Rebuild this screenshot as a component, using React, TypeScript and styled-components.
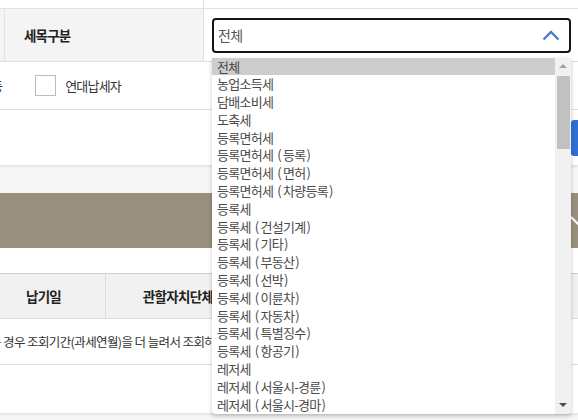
import * as React from "react";
import styled, { createGlobalStyle } from "styled-components";

const FONT = `"Noto Sans CJK KR", "Noto Sans", sans-serif`;

const GlobalStyle = createGlobalStyle`
  html, body {
    margin: 0;
    padding: 0;
    background: #f6f6f6;
    overflow: hidden;
  }
  body {
    font-family: ${FONT};
    color: #333;
  }
`;

const TAX_ITEMS = [
  "전체",
  "농업소득세",
  "담배소비세",
  "도축세",
  "등록면허세",
  "등록면허세(등록)",
  "등록면허세(면허)",
  "등록면허세(차량등록)",
  "등록세",
  "등록세(건설기계)",
  "등록세(기타)",
  "등록세(부동산)",
  "등록세(선박)",
  "등록세(이륜차)",
  "등록세(자동차)",
  "등록세(특별징수)",
  "등록세(항공기)",
  "레저세",
  "레저세(서울시-경륜)",
  "레저세(서울시-경마)",
];

const Page = styled.div`
  width: 640px;
  height: 420px;
  display: flex;
  flex-direction: column;
`;

const SearchPanel = styled.section`
  background: #fff;
  box-shadow: 0 2px 3px rgba(0, 0, 0, 0.08);
  display: flex;
  flex-direction: column;
  height: 165px;
`;

const TopStrip = styled.div`
  height: 8px;
  border-bottom: 1px solid #e2e2e2;
  display: flex;
`;

const StripCell = styled.div`
  width: 203px;
  border-right: 1px solid #e2e2e2;
`;

const FormRow = styled.div`
  height: 52px;
  display: flex;
  border-bottom: 1px solid #dedede;
`;

const CutCell = styled.div`
  width: 4px;
  background: #f4f4f4;
  border-right: 1px solid #e2e2e2;
`;

const LabelCell = styled.div`
  width: 179px;
  padding-left: 19px;
  background: #f4f4f4;
  border-right: 1px solid #e2e2e2;
  display: flex;
  align-items: center;
  font-size: 13.5px;
  font-weight: 700;
  letter-spacing: -0.8px;
  color: #222;
`;

const FieldCell = styled.div`
  flex: 1;
  padding: 8px;
  display: flex;
  align-items: center;
`;

const SelectWrap = styled.div`
  position: relative;
  width: 359px;
`;

const SelectBox = styled.div`
  height: 31px;
  border: 2px solid #151515;
  border-radius: 4px;
  display: flex;
  align-items: center;
  justify-content: space-between;
  padding: 0 9px 0 4px;
  font-size: 14px;
  letter-spacing: -0.6px;
  color: #555;
  background: #fff;
`;

const DropList = styled.div`
  position: absolute;
  left: 0;
  top: 40px;
  width: 359px;
  height: 356px;
  background: #fff;
  border-radius: 0 0 4px 4px;
  box-shadow: 0 2px 4px rgba(0, 0, 0, 0.22);
  display: flex;
  overflow: hidden;
  z-index: 10;
`;

const Options = styled.ul`
  flex: 1;
  margin: 0;
  padding: 0;
  list-style: none;
`;

const Option = styled.li<{ $active?: boolean }>`
  height: 17.8px;
  line-height: 17.8px;
  padding-left: 5px;
  font-size: 13px;
  letter-spacing: -0.7px;
  color: #4a4a4a;
  background: ${({ $active }) => ($active ? "#cdcdcd" : "transparent")};
  white-space: nowrap;
`;

const Paren = styled.span<{ $open?: boolean }>`
  margin-left: ${({ $open }) => ($open ? "4px" : "1px")};
  margin-right: ${({ $open }) => ($open ? "2px" : "0")};
`;

const ScrollBar = styled.div`
  width: 16px;
  background: #f1f1f1;
  display: flex;
  flex-direction: column;
  align-items: center;
`;

const ScrollArrow = styled.div<{ $down?: boolean; $dim?: boolean }>`
  height: 17px;
  display: flex;
  align-items: center;
  justify-content: center;
  &::before {
    content: "";
    border-left: 4px solid transparent;
    border-right: 4px solid transparent;
    ${({ $down, $dim }) =>
      $down
        ? `border-top: 4px solid ${$dim ? "#a3a3a3" : "#505050"};`
        : `border-bottom: 4px solid ${$dim ? "#a3a3a3" : "#505050"};`}
  }
`;

const ScrollTrack = styled.div`
  flex: 1;
  width: 100%;
  display: flex;
  flex-direction: column;
  align-items: center;
`;

const ScrollThumb = styled.div`
  width: 13px;
  height: 73px;
  background: #c1c1c1;
  margin-top: 1px;
`;

const OptionRow = styled.div`
  height: 47px;
  display: flex;
  align-items: center;
  border-bottom: 1px solid #dedede;
  font-size: 13px;
  letter-spacing: -0.8px;
  color: #333;
`;

const CutText = styled.span`
  margin-left: -9px;
`;

const CheckBox = styled.span`
  width: 19px;
  height: 19px;
  border: 1px solid #bdbdbd;
  background: #fff;
  margin-left: 33px;
`;

const CheckLabel = styled.span`
  margin-left: 9px;
`;

const ActionRow = styled.div`
  flex: 1;
  display: flex;
  align-items: flex-start;
  padding-top: 10px;
  padding-left: 571px;
`;

const SearchButton = styled.div`
  width: 70px;
  height: 36px;
  background: #2f6fd4;
  border-radius: 3px;
`;

const Gap = styled.div`
  height: 28px;
`;

const ResultPanel = styled.section`
  background: #fff;
  height: 220px;
  box-shadow: 0 2px 3px rgba(0, 0, 0, 0.08);
  display: flex;
  flex-direction: column;
`;

const ResultBar = styled.div`
  height: 55px;
  background: #998f7e;
  display: flex;
  align-items: center;
  padding-left: 566px;
`;

const Table = styled.div`
  margin-top: 25px;
  margin-left: -18px;
  display: flex;
  flex-direction: column;
`;

const HeadRow = styled.div`
  height: 44px;
  display: flex;
  background: #f1f1f1;
  border-top: 1px solid #cfcfcf;
  border-bottom: 1px solid #dcdcdc;
`;

const HeadCell = styled.div<{ $w: number }>`
  width: ${({ $w }) => $w}px;
  display: flex;
  align-items: center;
  justify-content: center;
  border-right: 1px solid #dcdcdc;
  font-size: 13.5px;
  font-weight: 700;
  letter-spacing: -0.7px;
  color: #222;
`;

const EmptyRow = styled.div`
  height: 45px;
  display: flex;
  align-items: center;
  border-bottom: 1px solid #dedede;
  font-size: 12.5px;
  letter-spacing: -0.6px;
  color: #333;
  white-space: nowrap;
`;

const EmptyText = styled.span`
  margin-left: -3px;
`;

function ChevronUp() {
  return (
    <svg width="18" height="12" viewBox="0 0 18 12">
      <polyline
        points="1.5,10.5 9,3 16.5,10.5"
        fill="none"
        stroke="#4a7bd0"
        strokeWidth="2.4"
      />
    </svg>
  );
}

function ChevronDown() {
  return (
    <svg width="24" height="14" viewBox="0 0 24 14">
      <polyline
        points="5,3 14,12 23,3"
        fill="none"
        stroke="#fff"
        strokeWidth="2"
      />
    </svg>
  );
}

// splits "등록세(기타)" so the brackets get the wider spacing of the native list font
function OptionText({ text }: { text: string }) {
  const match = text.match(/^(.*?)\((.*)\)$/);
  if (!match) return <>{text}</>;
  return (
    <>
      {match[1]}
      <Paren $open>(</Paren>
      {match[2]}
      <Paren>)</Paren>
    </>
  );
}

export default function App() {
  return (
    <>
      <GlobalStyle />
      <Page>
        <SearchPanel>
          <TopStrip>
            <StripCell />
          </TopStrip>
          <FormRow>
            <CutCell />
            <LabelCell>세목구분</LabelCell>
            <FieldCell>
              <SelectWrap>
                <SelectBox>
                  <span>전체</span>
                  <ChevronUp />
                </SelectBox>
                <DropList>
                  <Options>
                    {TAX_ITEMS.map((item, index) => (
                      <Option key={item} $active={index === 0}>
                        <OptionText text={item} />
                      </Option>
                    ))}
                  </Options>
                  <ScrollBar>
                    <ScrollArrow $dim />
                    <ScrollTrack>
                      <ScrollThumb />
                    </ScrollTrack>
                    <ScrollArrow $down />
                  </ScrollBar>
                </DropList>
              </SelectWrap>
            </FieldCell>
          </FormRow>
          <OptionRow>
            <CutText>등</CutText>
            <CheckBox />
            <CheckLabel>연대납세자</CheckLabel>
          </OptionRow>
          <ActionRow>
            <SearchButton />
          </ActionRow>
        </SearchPanel>
        <Gap />
        <ResultPanel>
          <ResultBar>
            <ChevronDown />
          </ResultBar>
          <Table>
            <HeadRow>
              <HeadCell $w={123}>납기일</HeadCell>
              <HeadCell $w={144}>관할자치단체</HeadCell>
            </HeadRow>
            <EmptyRow>
              <EmptyText>
                없는 경우 조회기간(과세연월)을 더 늘려서 조회하시기 바랍니다.
              </EmptyText>
            </EmptyRow>
          </Table>
        </ResultPanel>
      </Page>
    </>
  );
}
